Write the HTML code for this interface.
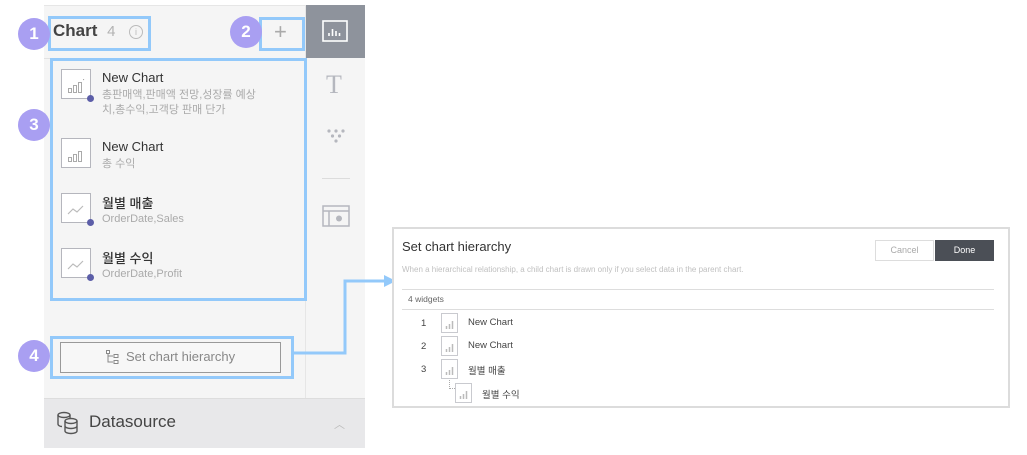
<!DOCTYPE html>
<html><head><meta charset="utf-8"><style>
*{box-sizing:border-box;margin:0;padding:0}
body{width:1027px;height:455px;background:#fff;position:relative;overflow:hidden;font-family:"Liberation Sans","Noto Sans CJK KR",sans-serif}
.a{position:absolute}
.circ{position:absolute;width:32px;height:32px;border-radius:50%;background:#a99ff2;color:#fff;font-weight:bold;font-size:17px;text-align:center;line-height:32px}
.blue{position:absolute;border:3px solid #93c9fa}
.ico{position:absolute;width:30px;height:30px;border:1px solid #b5b6bd;background:#fff}
.dot{position:absolute;width:7px;height:7px;border-radius:50%;background:#5c5ea8;right:-4px;bottom:-4px}
.t{position:absolute;font-size:13px;color:#333}
.s{position:absolute;font-size:11px;color:#aaa;line-height:15px}
.di{position:absolute;width:17px;height:20px;border:1px solid #c9cacf;background:#fff}
.dt{position:absolute;font-size:9.5px;color:#444}
</style></head><body>
<div class="a" style="left:44px;top:5px;width:321px;height:443px;background:#f5f5f5;border-top:1px solid #e6e6e6"></div>
<div class="a" style="left:44px;top:58px;width:262px;height:1px;background:#e2e2e2"></div>
<div class="a" style="left:305px;top:5px;width:1px;height:393px;background:#e6e6e6"></div>
<div class="a" style="left:306px;top:5px;width:59px;height:53px;background:#8e939c"></div>
<svg class="a" style="left:322px;top:20px" width="26" height="22" viewBox="0 0 26 22"><rect x="1" y="1" width="24" height="20" fill="none" stroke="#fff" stroke-width="1.6"/><path d="M7 16v-3M10.5 16v-7M14 16v-5M17.5 16v-3" stroke="#fff" stroke-width="1.6"/></svg>
<div class="a" style="left:326px;top:70px;font-family:'Liberation Serif',serif;font-size:26px;color:#b5b7be">T</div>
<svg class="a" style="left:326px;top:128px" width="20" height="16"><g fill="#b5b7be"><circle cx="3" cy="3" r="1.6"/><circle cx="10" cy="3" r="1.6"/><circle cx="17" cy="3" r="1.6"/><circle cx="6.5" cy="8" r="1.6"/><circle cx="13.5" cy="8" r="1.6"/><circle cx="10" cy="13" r="1.6"/></g></svg>
<div class="a" style="left:322px;top:178px;width:28px;height:1px;background:#dcdcdc"></div>
<svg class="a" style="left:322px;top:205px" width="28" height="22"><rect x="1" y="1" width="26" height="20" fill="none" stroke="#b5b7be" stroke-width="1.5"/><path d="M1 6h26M7 6v15" stroke="#b5b7be" stroke-width="1.5"/><circle cx="17" cy="13.5" r="3" fill="#b5b7be"/></svg>
<div class="a" style="left:53px;top:21px;font-size:17px;font-weight:bold;color:#444">Chart <span style="color:#b3b3b3;font-weight:normal;font-size:15px;margin-left:5px">4</span></div>
<div class="a" style="left:129px;top:25px;width:14px;height:14px;border:1px solid #bbb;border-radius:50%;font-size:9px;color:#bbb;text-align:center;line-height:12px">i</div>
<div class="a" style="left:274px;top:19px;font-size:22px;color:#aaa">+</div>
<div class="ico" style="left:61px;top:69px"><svg width="28" height="28"><g fill="none" stroke="#aaa" stroke-width="1"><rect x="6.5" y="18.5" width="3" height="4"/><rect x="11.5" y="15.5" width="3" height="7"/><rect x="16.5" y="12.5" width="3" height="10"/><rect x="21.5" y="9.5" width="0.1" height="0.1"/></g></svg><div class="dot"></div></div>
<div class="t" style="left:102px;top:70px">New Chart</div>
<div class="s" style="left:102px;top:88px">총판매액,판매액 전망,성장률 예상<br>치,총수익,고객당 판매 단가</div>
<div class="ico" style="left:61px;top:138px"><svg width="28" height="28"><g fill="none" stroke="#aaa" stroke-width="1"><rect x="6.5" y="18.5" width="3" height="4"/><rect x="11.5" y="15.5" width="3" height="7"/><rect x="16.5" y="12.5" width="3" height="10"/></g></svg></div>
<div class="t" style="left:102px;top:139px">New Chart</div>
<div class="s" style="left:102px;top:157px">총 수익</div>
<div class="ico" style="left:61px;top:193px"><svg width="28" height="28"><path d="M6 20l5-5 4 3 6-6" stroke="#bbb" fill="none" stroke-width="1.2"/></svg><div class="dot"></div></div>
<div class="t" style="left:102px;top:193px;font-weight:500">월별 매출</div>
<div class="s" style="left:102px;top:212px">OrderDate,Sales</div>
<div class="ico" style="left:61px;top:248px"><svg width="28" height="28"><path d="M6 20l5-5 4 3 6-6" stroke="#bbb" fill="none" stroke-width="1.2"/></svg><div class="dot"></div></div>
<div class="t" style="left:102px;top:248px;font-weight:500">월별 수익</div>
<div class="s" style="left:102px;top:267px">OrderDate,Profit</div>
<div class="a" style="left:60px;top:342px;width:221px;height:31px;border:1px solid #999;background:#f7f7f7"></div>
<svg class="a" style="left:106px;top:350px" width="14" height="15"><path d="M2 1v11h5M2 6h5" stroke="#888" fill="none"/><rect x="0.5" y="0.5" width="3" height="3" fill="#fff" stroke="#888"/><rect x="8" y="4.5" width="4" height="3" fill="#fff" stroke="#888"/><rect x="8" y="10.5" width="4" height="3" fill="#fff" stroke="#888"/></svg>
<div class="a" style="left:126px;top:349px;font-size:13px;color:#888">Set chart hierarchy</div>
<div class="a" style="left:44px;top:398px;width:321px;height:50px;background:#e8e8ea;border-top:1px solid #ddd"></div>
<svg class="a" style="left:56px;top:411px" width="24" height="24"><g fill="none" stroke="#555" stroke-width="1.4"><ellipse cx="8" cy="4" rx="6" ry="2.5"/><path d="M2 4v9c0 1.5 2 2.5 4 2.5M14 4v3"/><ellipse cx="15" cy="10" rx="6" ry="2.5"/><path d="M9 10v10c0 1.5 3 2.5 6 2.5s6-1 6-2.5V10M9 15c0 1.5 3 2.5 6 2.5s6-1 6-2.5"/></g></svg>
<div class="a" style="left:89px;top:412px;font-size:17px;color:#444">Datasource</div>
<div class="a" style="left:334px;top:416px;font-size:11px;color:#bbb">︿</div>
<div class="blue" style="left:48px;top:16px;width:103px;height:35px"></div>
<div class="blue" style="left:259px;top:17px;width:46px;height:34px"></div>
<div class="blue" style="left:50px;top:58px;width:257px;height:243px"></div>
<div class="blue" style="left:50px;top:336px;width:244px;height:43px"></div>
<svg class="a" style="left:0;top:0" width="1027" height="455"><path d="M293 353H345V281H385" stroke="#93c9fa" stroke-width="3" fill="none"/><path d="M384 275l12 6-12 6z" fill="#93c9fa"/></svg>
<div class="circ" style="left:18px;top:18px">1</div>
<div class="circ" style="left:230px;top:16px">2</div>
<div class="circ" style="left:18px;top:109px">3</div>
<div class="circ" style="left:18px;top:340px">4</div>
<div class="a" style="left:392px;top:227px;width:618px;height:181px;border:2px solid #dcdcdc;background:#fff"></div>
<div class="a" style="left:402px;top:239px;font-size:13px;color:#333">Set chart hierarchy</div>
<div class="a" style="left:402px;top:265px;font-size:8px;color:#c0c0c0">When a hierarchical relationship, a child chart is drawn only if you select data in the parent chart.</div>
<div class="a" style="left:875px;top:240px;width:59px;height:21px;border:1px solid #ddd;font-size:9px;color:#aaa;text-align:center;line-height:19px">Cancel</div>
<div class="a" style="left:935px;top:240px;width:59px;height:21px;background:#4b4f56;font-size:9px;color:#fff;text-align:center;line-height:21px">Done</div>
<div class="a" style="left:402px;top:289px;width:592px;height:1px;background:#ddd"></div>
<div class="a" style="left:408px;top:294px;font-size:8.5px;color:#666">4 widgets</div>
<div class="a" style="left:402px;top:309px;width:592px;height:1px;background:#ddd"></div>
<div class="dt" style="left:421px;top:318px">1</div><div class="di" style="left:441px;top:313px"><svg width="15" height="18"><path d="M4.5 15v-3M7.5 15v-5M10.5 15v-8" stroke="#bbb" stroke-width="1.5"/></svg></div><div class="dt" style="left:468px;top:317px">New Chart</div>
<div class="dt" style="left:421px;top:341px">2</div><div class="di" style="left:441px;top:336px"><svg width="15" height="18"><path d="M4.5 15v-3M7.5 15v-5M10.5 15v-8" stroke="#bbb" stroke-width="1.5"/></svg></div><div class="dt" style="left:468px;top:340px">New Chart</div>
<div class="dt" style="left:421px;top:364px">3</div><div class="di" style="left:441px;top:359px"><svg width="15" height="18"><path d="M4.5 15v-3M7.5 15v-5M10.5 15v-8" stroke="#bbb" stroke-width="1.5"/></svg></div><div class="dt" style="left:468px;top:363px">월별 매출</div>
<div class="a" style="left:449px;top:380px;width:8px;height:9px;border-left:1px dotted #aaa;border-bottom:1px dotted #aaa"></div>
<div class="di" style="left:455px;top:383px"><svg width="15" height="18"><path d="M4.5 15v-3M7.5 15v-5M10.5 15v-8" stroke="#bbb" stroke-width="1.5"/></svg></div><div class="dt" style="left:482px;top:387px">월별 수익</div>
</body></html>
